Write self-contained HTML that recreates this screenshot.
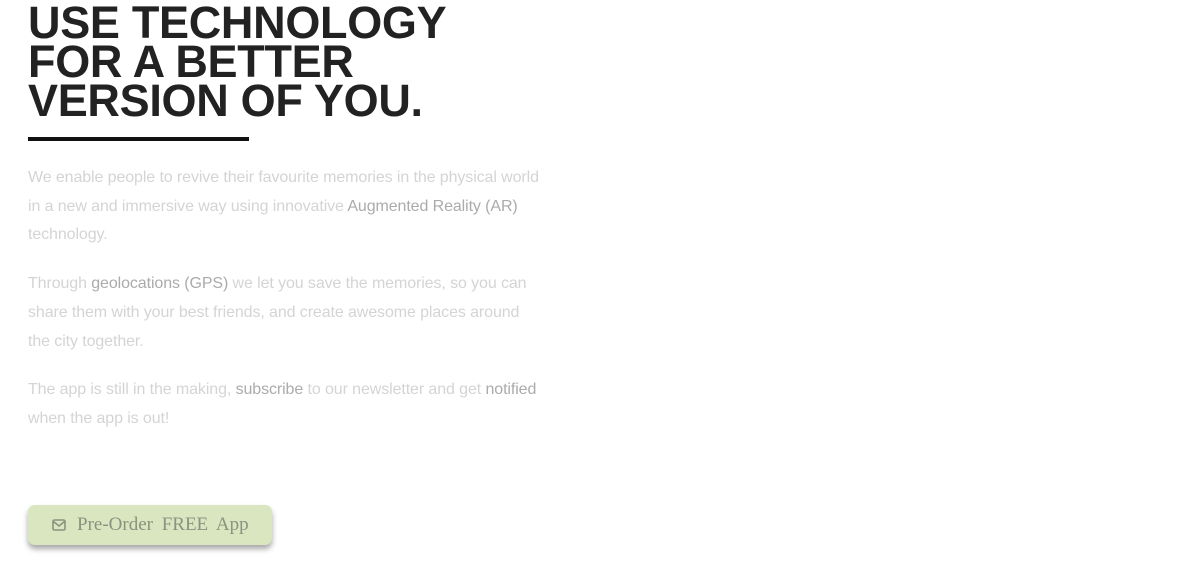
<!DOCTYPE html>
<html><head><meta charset="utf-8"><style>
html,body{margin:0;padding:0;background:#fff;width:1200px;height:563px;overflow:hidden}
body{font-family:"Liberation Sans",sans-serif}
h1{position:absolute;left:28px;top:3px;margin:0;font-size:45px;line-height:39px;font-weight:bold;color:#222;letter-spacing:-0.3px;width:600px}
.bar{position:absolute;left:28px;top:137px;width:221px;height:4px;background:#111}
.txt{position:absolute;left:28px;top:164px;width:600px;white-space:nowrap;color:#d4d4d4;font-size:16px;line-height:28.7px;letter-spacing:-0.1px}
.txt p{margin:0 0 20px}
.txt b{font-weight:normal;color:#ababab}
.btn{position:absolute;left:28px;top:505px;width:244px;height:40px;background:#d9e6c0;border-radius:7px;box-shadow:0 4px 6px rgba(0,0,0,.35);color:#8a9280;font-family:"Liberation Serif",serif;font-size:19px;line-height:40px;box-sizing:border-box;padding-left:49px;word-spacing:4px}
.btn svg{position:absolute;left:24px;top:14px}
</style></head><body>
<h1>USE TECHNOLOGY<br>FOR A BETTER<br>VERSION OF YOU.</h1>
<div class="bar"></div>
<div class="txt">
<p>We enable people to revive their favourite memories in the physical world<br>in a new and immersive way using innovative <b>Augmented Reality (AR)</b><br>technology.</p>
<p>Through <b>geolocations (GPS)</b> we let you save the memories, so you can<br>share them with your best friends, and create awesome places around<br>the city together.</p>
<p>The app is still in the making, <b>subscribe</b> to our newsletter and get <b>notified</b><br>when the app is out!</p>
</div>
<div class="btn"><svg width="14" height="12" viewBox="0 0 14 12"><rect x="1" y="1" width="12" height="10" rx="1.5" fill="none" stroke="#8a9280" stroke-width="1.6"/><path d="M1.5 2.5 L7 7 L12.5 2.5" fill="none" stroke="#8a9280" stroke-width="1.6"/></svg>Pre-Order FREE App</div>
</body></html>
